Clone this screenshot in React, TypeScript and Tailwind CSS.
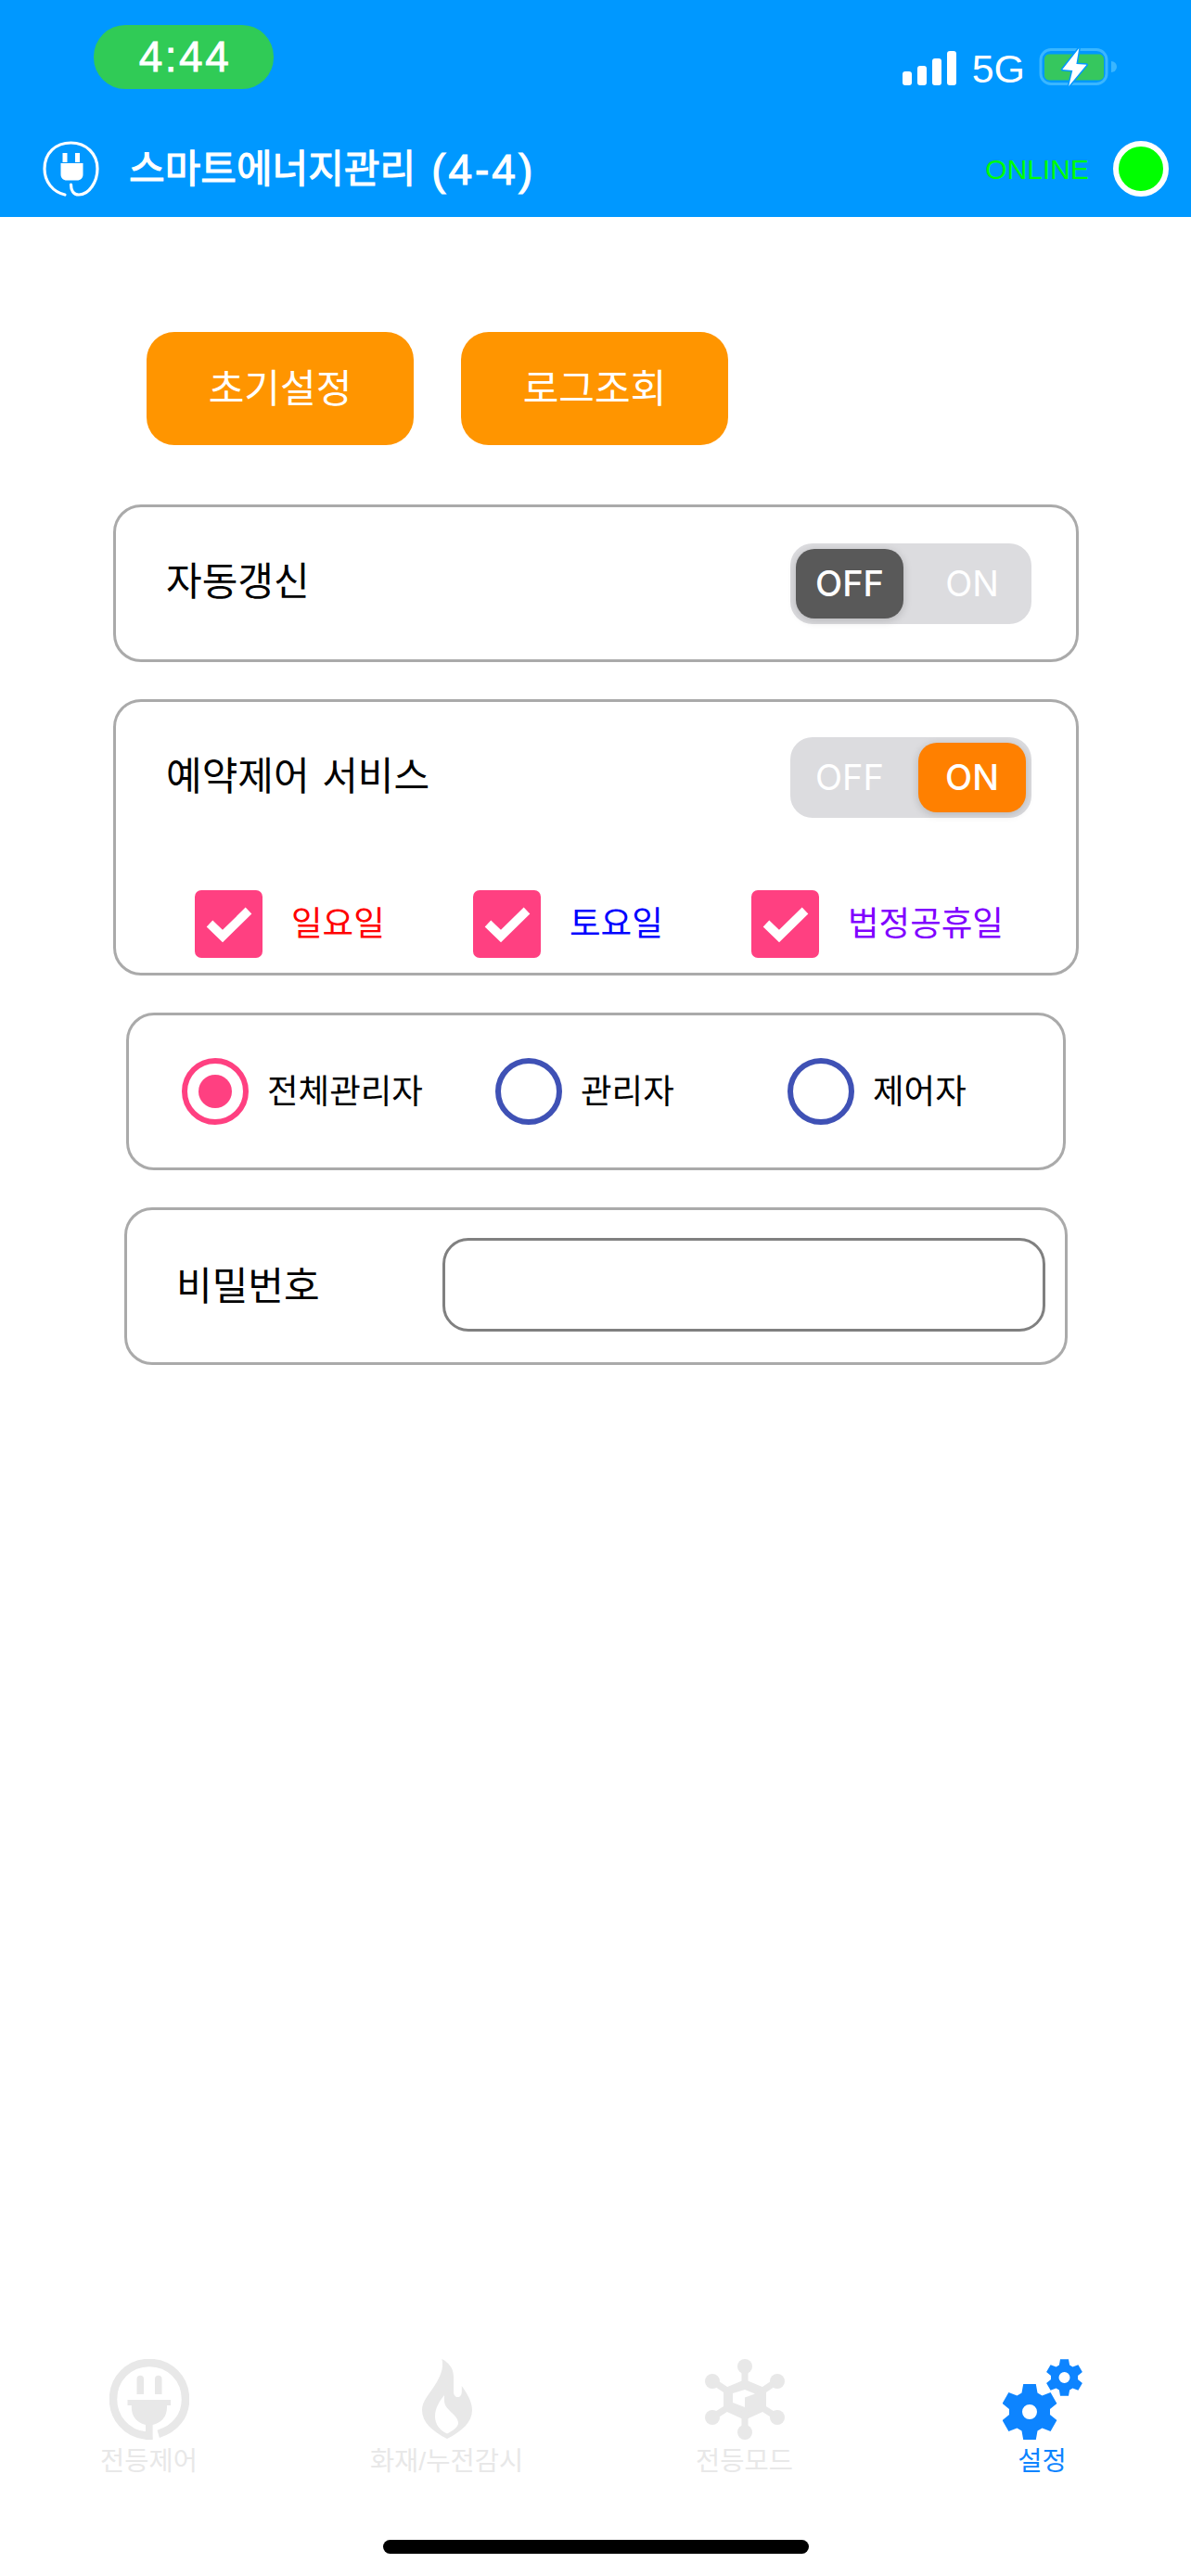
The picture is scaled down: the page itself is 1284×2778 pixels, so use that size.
import React from "react";

const gearPath = (cx: number, cy: number, s: number, holeR: number) => {
  const base: [number, number][] = [[-8.5, -20.5], [-6.8, -30], [6.8, -30], [8.5, -20.5]];
  const pts: string[] = [];
  for (let i = 0; i < 6; i++) {
    const a = (i * Math.PI) / 3;
    for (const [x, y] of base) {
      const px = cx + s * (x * Math.cos(a) - y * Math.sin(a));
      const py = cy + s * (x * Math.sin(a) + y * Math.cos(a));
      pts.push(`${px.toFixed(2)} ${py.toFixed(2)}`);
    }
  }
  const hole = `M${cx - holeR} ${cy}a${holeR} ${holeR} 0 1 0 ${2 * holeR} 0a${holeR} ${holeR} 0 1 0 ${-2 * holeR} 0z`;
  return `M${pts.join("L")}z${hole}`;
};

const HeaderPlug = () => (
  <svg width="61" height="60" viewBox="0 0 61 60" fill="none" className="shrink-0">
    <path d="M24 58C11 55 2 44 2 30 2 13 14 2 30.5 2 47 2 59 14 59 30 59 44 50 58 39 58 33 58 30.5 53 30.5 47" stroke="white" strokeWidth="3.2" strokeLinecap="round" />
    <rect x="21.5" y="13" width="5" height="10" fill="white" />
    <rect x="35" y="13" width="5" height="10" fill="white" />
    <path d="M19.5 24H43.5V36C43.5 40 41 42.5 37 42.5H26C22 42.5 19.5 40 19.5 36Z" fill="white" />
  </svg>
);

const TabPlug = () => (
  <svg width="86" height="87" viewBox="0 0 86 87" fill="none">
    <path d="M46 82.6C43 82.9 42 82.9 39 82.6 18 80.5 4 63 4 43.5 4 21 21 4 43 4 65 4 82 21 82 43.5 82 61 71 75.5 52.7 80.8" stroke="#e8e8e8" strokeWidth="8.5" />
    <path d="M29.5 21.5a3.7 3.7 0 0 1 7.5 0V38H29.5ZM49 21.5a3.7 3.7 0 0 1 7.5 0V38H49Z" fill="#e8e8e8" />
    <path d="M19.5 44H66V50H62V52C62 62 56 69 46.6 71V87H39V71C30 69 23.8 62 23.8 52V50H19.5Z" fill="#e8e8e8" />
  </svg>
);

const Flame = () => (
  <svg width="54" height="87" viewBox="0 0 54 87">
    <path fillRule="evenodd" fill="#e8e8e8" d="M21.4 0C29 4 34 10 34 19V35C34 39 36 41 38.5 41 41 41 42.8 39 42.8 35V29C49 38 54 46 54 55 54 68 43 78 27 86 11 78 0 68 0 55 0 45 8 38 14 28 19 20 24 10 21.4 0ZM24 39C18 46 14 54 14 62 14 70 19 77 27 80.5 34 77 39 73 39 69 39 60 24 55 24 45Z" />
  </svg>
);

const Nodes = () => (
  <svg width="86" height="87" viewBox="0 0 86 87" fill="none">
    <g stroke="#e8e8e8" strokeWidth="7">
      <path d="M43 7V26M8 23.5 23.5 34M78 23.5 62.5 34M8 63 23.5 53M78 63 62.5 53M43 80V62" />
      <path d="M43 26 62.5 34V53L43 62 23.5 53V34Z" fill="#e8e8e8" />
    </g>
    <path d="M43 33 54 37.5 43 41.5V52L30 47V37Z" fill="white" />
    <g fill="#e8e8e8">
      <ellipse cx="43" cy="8" rx="8" ry="8" />
      <ellipse cx="8" cy="24" rx="8" ry="8" />
      <ellipse cx="78" cy="24" rx="8" ry="8" />
      <ellipse cx="8" cy="63" rx="8" ry="8" />
      <ellipse cx="78" cy="63" rx="8" ry="8" />
      <ellipse cx="43" cy="79" rx="8" ry="8" />
    </g>
  </svg>
);

const Gears = () => (
  <svg width="86" height="87" viewBox="0 0 86 87">
    <path fillRule="evenodd" fill="#0d84ff" d={gearPath(29, 57, 1, 8)} />
    <path fillRule="evenodd" fill="#0d84ff" d={gearPath(66.5, 20, 0.66, 6)} />
  </svg>
);

const Battery = () => (
  <svg width="84" height="46" viewBox="0 0 84 46" fill="none" className="-mt-[1px] ml-[15px]">
    <rect x="2" y="3.5" width="71" height="37" rx="11" stroke="#3ab6ff" strokeWidth="3" />
    <rect x="6" y="8.5" width="64" height="28" rx="5" fill="#36c75e" />
    <path d="M78 16a6 6 0 0 1 0 12Z" fill="#3ab6ff" />
    <path d="M43.3 2 25.3 25 36.3 26 32.2 43 51.5 19.8 40.4 19.1Z" fill="white" stroke="#0098ff" strokeWidth="3" paintOrder="stroke" strokeLinejoin="round" />
  </svg>
);

const Toggle = ({ on }: { on: boolean }) => (
  <div className="flex h-[87px] w-[260px] shrink-0 items-center justify-between rounded-[24px] bg-[#dcdcdf] px-[6px] [font-family:Inter,'Liberation_Sans',sans-serif] text-[38px] text-white">
    <div className={on ? "flex h-[75px] w-[116px] items-center justify-center" : "flex h-[75px] w-[116px] items-center justify-center rounded-[20px] bg-[#595959] font-medium shadow-[0_2px_10px_rgba(0,0,0,0.18)]"}>OFF</div>
    <div className={on ? "flex h-[75px] w-[116px] items-center justify-center rounded-[20px] bg-[#ff8000] font-medium shadow-[0_2px_10px_rgba(0,0,0,0.18)]" : "flex h-[75px] w-[116px] items-center justify-center"}>ON</div>
  </div>
);

const Check = ({ label, cls }: { label: string; cls: string }) => (
  <div className="flex w-[300px] items-center">
    <div className="h-[73px] w-[73px] shrink-0 rounded-[7px] bg-[#ff4081]">
      <svg width="73" height="73" viewBox="0 0 73 73" fill="none">
        <path d="M16 36 30 49.5 58 22" stroke="white" strokeWidth="9.5" />
      </svg>
    </div>
    <span className={`ml-[31px] text-[36.5px] leading-[44px] ${cls}`}>{label}</span>
  </div>
);

const Radio = ({ label, on, cls }: { label: string; on?: boolean; cls: string }) => (
  <div className={`flex items-center ${cls}`}>
    <div className={on ? "flex h-[72px] w-[72px] items-center justify-center rounded-full border-[6px] border-[#ff4081]" : "h-[72px] w-[72px] rounded-full border-[6px] border-[#3f51b5]"}>
      {on && <div className="h-[36px] w-[36px] rounded-full bg-[#ff4081]" />}
    </div>
    <span className="ml-[20px] mt-[2px] text-[36.5px] leading-[44px] text-black">{label}</span>
  </div>
);

const Tab = ({ icon, label, cls }: { icon: React.ReactNode; label: string; cls: string }) => (
  <div className="flex flex-1 flex-col items-center">
    <div className="flex h-[87px] items-center justify-center">{icon}</div>
    <span className={`mt-[5px] text-[28.5px] leading-[36px] ${cls}`}>{label}</span>
  </div>
);

export default function App() {
  return (
    <div className="flex h-[2778px] w-[1284px] flex-col bg-white [font-family:'Liberation_Sans','Noto_Sans_CJK_KR',sans-serif]">
      <div className="flex h-[234px] shrink-0 flex-col bg-[#0098ff] text-white">
        <div className="flex h-[152px] items-start">
          <div className="ml-[101px] mt-[27px] flex h-[69px] w-[194px] items-center justify-center rounded-[34px] bg-[#30cb56] pl-[3px] text-[46px] tracking-[2.5px] [-webkit-text-stroke:0.8px_white]">4:44</div>
          <div className="ml-auto mr-[80px] mt-[51px] flex h-[44px] items-center">
            <div className="flex h-[37px] items-end gap-[6px]">
              <div className="h-[15px] w-[10px] rounded-[3px] bg-white" />
              <div className="h-[21px] w-[10px] rounded-[3px] bg-white" />
              <div className="h-[29px] w-[10px] rounded-[3px] bg-white" />
              <div className="h-[37px] w-[10px] rounded-[3px] bg-white" />
            </div>
            <span className="ml-[17px] mt-[2px] text-[43px] leading-[44px]">5G</span>
            <Battery />
          </div>
        </div>
        <div className="flex h-[60px] items-center pl-[46px] pr-[24px]">
          <HeaderPlug />
          <span className="ml-[32px] mt-[2px] flex items-center text-[42px] leading-[56px] [-webkit-text-stroke:1.1px_white]">
            스마트에너지관리
            <span className="ml-[17px] text-[46px] tracking-[3px]">(4-4)</span>
          </span>
          <span className="ml-auto mt-[2px] text-[30px] leading-[36px] text-[#00ff00]">ONLINE</span>
          <div className="ml-[26px] h-[60px] w-[60px] rounded-full border-[6px] border-white bg-[#00ff00]" />
        </div>
      </div>

      <main className="flex-1">
        <div className="ml-[158px] mt-[124px] flex gap-[51px]">
          <div className="flex h-[122px] w-[288px] items-center justify-center rounded-[30px] bg-[#ff9500] text-[42px] text-white">초기설정</div>
          <div className="flex h-[122px] w-[288px] items-center justify-center rounded-[30px] bg-[#ff9500] text-[42px] text-white">로그조회</div>
        </div>

        <div className="ml-[122px] mt-[64px] flex h-[170px] w-[1041px] items-center justify-between rounded-[30px] border-[3px] border-[#aaaaaa] pl-[54px] pr-[48px]">
          <span className="mb-[2px] text-[42px] leading-[52px] text-black">자동갱신</span>
          <Toggle on={false} />
        </div>

        <div className="ml-[122px] mt-[40px] h-[298px] w-[1041px] rounded-[30px] border-[3px] border-[#aaaaaa]">
          <div className="flex items-center justify-between pl-[54px] pr-[48px] pt-[38px]">
            <span className="mb-[2px] text-[42px] leading-[52px] text-black [word-spacing:2px]">예약제어 서비스</span>
            <Toggle on />
          </div>
          <div className="ml-[85px] mt-[78px] flex">
            <Check label="일요일" cls="text-[#ff0000]" />
            <Check label="토요일" cls="text-[#0000ff]" />
            <Check label="법정공휴일" cls="text-[#8000ff]" />
          </div>
        </div>

        <div className="ml-[136px] mt-[40px] flex h-[170px] w-[1013px] items-center rounded-[30px] border-[3px] border-[#aaaaaa] pl-[57px]">
          <Radio label="전체관리자" on cls="w-[338px]" />
          <Radio label="관리자" cls="w-[315px]" />
          <Radio label="제어자" cls="" />
        </div>

        <div className="ml-[134px] mt-[40px] flex h-[170px] w-[1017px] items-center rounded-[30px] border-[3px] border-[#aaaaaa] pl-[53px]">
          <span className="mt-[2px] w-[287px] text-[42px] leading-[52px] text-black">비밀번호</span>
          <div className="mb-[3px] h-[101px] w-[650px] rounded-[28px] border-[3px] border-[#808080]" />
        </div>
      </main>

      <footer className="h-[234px] shrink-0">
        <div className="flex">
          <Tab icon={<TabPlug />} label="전등제어" cls="text-[#e8e8e8]" />
          <Tab icon={<Flame />} label="화재/누전감시" cls="text-[#e8e8e8]" />
          <Tab icon={<Nodes />} label="전등모드" cls="text-[#e8e8e8]" />
          <Tab icon={<Gears />} label="설정" cls="text-[#0d84ff]" />
        </div>
        <div className="ml-[413px] mt-[67px] h-[15px] w-[459px] rounded-full bg-black" />
      </footer>
    </div>
  );
}
